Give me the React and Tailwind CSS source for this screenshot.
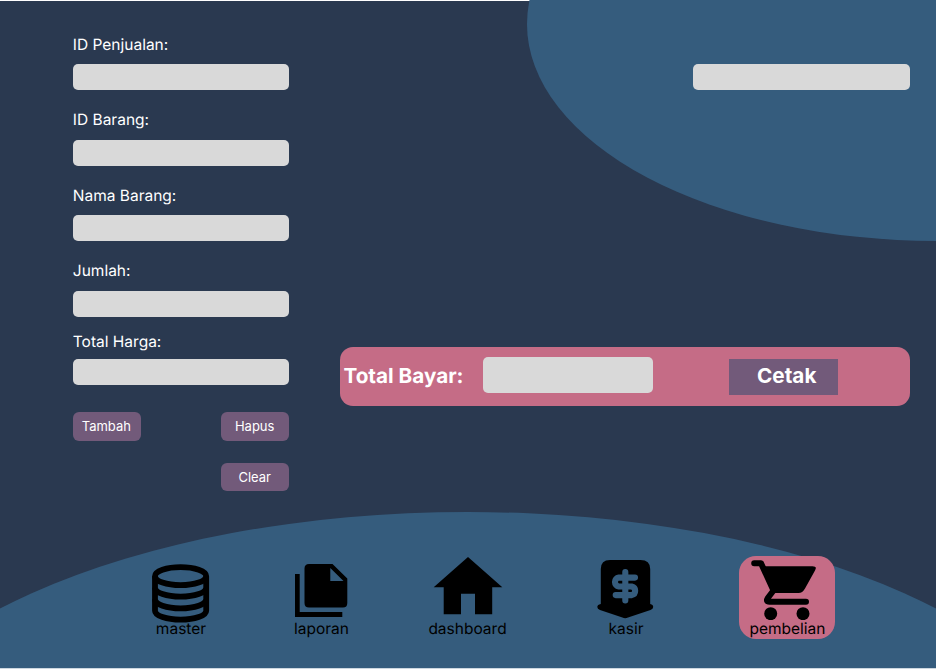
const fields = [
  { label: "ID Penjualan:", gap: "mb-5" },
  { label: "ID Barang:", gap: "mb-5" },
  { label: "Nama Barang:", gap: "mb-5" },
  { label: "Jumlah:", gap: "mb-[15.7px]" },
  { label: "Total Harga:", gap: "mb-[26.7px]" },
];

function Field({ label, gap, tight }) {
  return (
    <label className={`block ${gap}`}>
      <span className={`block h-5 text-[15.5px] leading-5 text-white ${tight ? "mb-[7.2px]" : "mb-[9.4px]"}`}>{label}</span>
      <span className="block h-[26px] w-[216.4px] rounded-[5px] bg-[#d9d9d9]" />
    </label>
  );
}

function Action({ children }) {
  return (
    <button className="block h-[28.5px] w-[68px] rounded-[6px] bg-[#725a7a] pr-px text-center text-[13px] leading-[28.5px] text-white">
      {children}
    </button>
  );
}

function DatabaseIcon() {
  return (
    <svg className="mb-[-3px] h-[59px] w-[58px]" viewBox="0 0 58 59" fill="none" stroke="black" strokeWidth="5.8">
      <ellipse cx="28.6" cy="12.2" rx="25.6" ry="9" />
      <path d="M3 12.200V46.700A25.600 9 0 0 0 54.200 46.700V12.200" />
      <path d="M3 23.700A25.600 9 0 0 0 54.200 23.700M3 35.300A25.600 9 0 0 0 54.200 35.300" />
    </svg>
  );
}

function FilesIcon() {
  return (
    <svg className="mb-[3px] ml-px h-[53px] w-[53px]" viewBox="0 0 53 53">
      <path fillRule="evenodd" d="M14 0H37.500L52.300 14.500V39Q52.300 43.500 48 43.500H14Q9.500 43.500 9.500 39V4.500Q9.500 0 14 0ZM35.300 4V17H48.500Z" />
      <path d="M0 10H4.700V48H47.300V53H0Z" />
    </svg>
  );
}

function HomeIcon() {
  return (
    <svg className="mb-[5px] ml-[2px] h-[58px] w-[70px]" viewBox="0 0 70 58">
      <path d="M35 0L69.300 30.300H59.200V57.300H42V36.700H28V57.300H10.700V30.300H.7Z" />
    </svg>
  );
}

function CashIcon() {
  return (
    <svg className="mb-px h-[59px] w-[57px]" viewBox="0 0 57 59">
      <path d="M13 0H43.500Q53.200 0 53.200 9V44Q56.200 44.500 56.200 47Q56.200 49 53.500 50L31 57.600Q28.200 58.700 25.400 57.600L3 50Q.3 49 .3 47Q.3 44.500 3.800 44V9Q3.800 0 13 0Z" />
      <path d="M28.300 12V40.500M38 17.600H21.800A4.500 4.500 0 0 0 21.800 26.500H34.700A4.400 4.400 0 0 1 34.700 35.100H18.700" fill="none" stroke="#355c7d" strokeWidth="6.100" strokeLinecap="round" />
    </svg>
  );
}

function CartIcon() {
  return (
    <svg className="mr-[6px] h-[60px] w-[66px]" viewBox="0 0 66 60">
      <path d="M3.200 3.200H10L22.500 30.500L16.800 38Q14.500 41.800 18.500 41.800H55" fill="none" stroke="black" strokeWidth="6" strokeLinecap="round" strokeLinejoin="round" />
      <path d="M11 6.200H61.500Q66.500 6.200 64 10.500L54 28.500Q51.500 33 47.500 33H23Z" />
      <circle cx="19.700" cy="53.700" r="6.500" />
      <circle cx="52" cy="53.700" r="6.500" />
    </svg>
  );
}

function NavItem({ icon, label, className, labelClass = "ml-px" }) {
  return (
    <a className={`flex h-[83px] w-24 flex-col items-center justify-end rounded-[17px] whitespace-nowrap ${className}`}>
      {icon}
      <span className={`h-[19px] text-[15.500px] leading-[18px] text-black ${labelClass}`}>{label}</span>
    </a>
  );
}

export default function App() {
  return (
    <div className="relative h-[669px] w-[937px] overflow-hidden bg-white font-['Inter',sans-serif] [text-rendering:geometricPrecision]">
      <div className="relative h-[669px] w-[936px] overflow-hidden bg-white">
        <div className="absolute inset-x-0 top-px bottom-0 bg-[#2a3950]" />
        <div className="absolute top-[-193px] left-[527.300px] h-[434px] w-[820px] rounded-[50%] bg-[#355c7d]" />
        <div className="absolute top-[512.300px] left-[-149px] h-[554px] w-[1234px] rounded-[50%] bg-[#355c7d]" />
        <div className="absolute inset-x-0 bottom-0 h-px bg-[#cdd7e0]" />

        <div className="relative flex h-[512px] pt-[35px] pl-[72.800px]">
          <section className="w-[217px]">
            {fields.map((f, i) => (
              <Field key={f.label} {...f} tight={i === 4} />
            ))}
            <div className="grid w-[216.400px] grid-cols-[68px_68px] justify-between gap-y-[22px]">
              <Action>Tambah</Action>
              <Action>Hapus</Action>
              <div className="col-start-2"><Action>Clear</Action></div>
            </div>
          </section>

          <section className="ml-[50.200px] flex w-[570px] flex-col">
            <div className="mt-[29.400px] h-[26px] w-[216.500px] self-end rounded-[5px] bg-[#d9d9d9]" />
            <div className="mt-[256.900px] flex h-[59px] items-center rounded-[13px] bg-[#c56c86] pl-[3.500px] text-[20.700px] font-bold text-white">
              <span className="mb-[3px] w-[139.500px] whitespace-nowrap">Total Bayar:</span>
              <div className="mb-[3px] h-[36px] w-[170px] rounded-[5px] bg-[#d9d9d9]" />
              <button className="mt-px ml-[76px] h-[36px] w-[109.500px] bg-[#725a7a] pb-[2px] pl-[6px] leading-[34px]">Cetak</button>
            </div>
          </section>
        </div>

        <nav className="relative h-[156px] w-[936px] pt-[44px]">
          <div className="flex">
            <NavItem className="ml-[133px]" labelClass="" icon={<DatabaseIcon />} label="master" />
            <NavItem className="ml-[44px]" icon={<FilesIcon />} label="laporan" />
            <NavItem className="ml-[50px]" icon={<HomeIcon />} label="dashboard" />
            <NavItem className="ml-[62px]" labelClass="ml-[2px]" icon={<CashIcon />} label="kasir" />
            <NavItem className="ml-[66px] bg-[#c56c86]" icon={<CartIcon />} label="pembelian" />
          </div>
        </nav>
      </div>
    </div>
  );
}
